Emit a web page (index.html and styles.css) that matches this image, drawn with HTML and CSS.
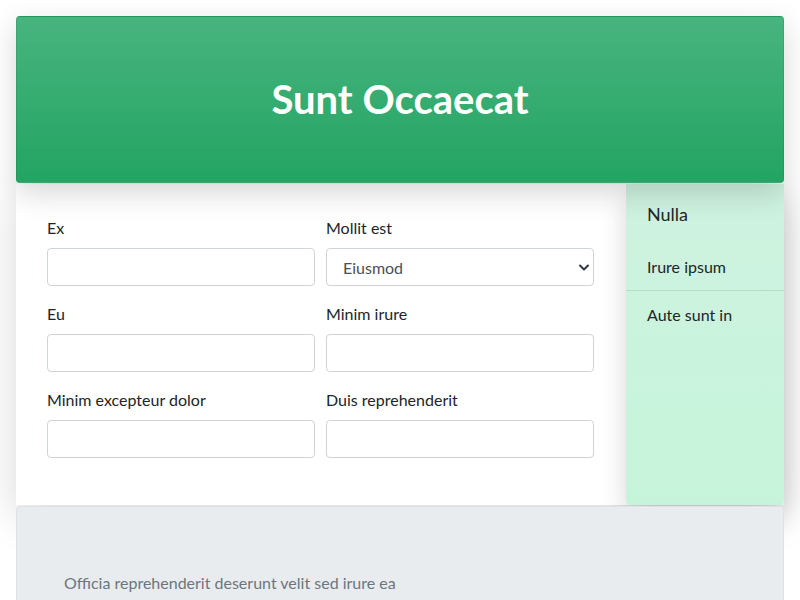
FILE: index.html
```html
<!DOCTYPE html>
<html lang="en">
<head>
<meta charset="utf-8">
<title>Sunt Occaecat</title>
<link rel="stylesheet" href="styles.css">
</head>
<body>
<div class="page">
  <header class="hero">
    <h1 class="hero-title">Sunt Occaecat</h1>
  </header>
  <div class="middle">
    <form class="form">
      <div class="field">
        <label class="label" for="f1">Ex</label>
        <input class="input" id="f1" type="text">
      </div>
      <div class="field">
        <label class="label" for="f2">Mollit est</label>
        <div class="select-wrap">
          <select class="input select" id="f2"><option>Eiusmod</option></select>
          <svg class="chevron" width="12" height="10" viewBox="0 0 12 10"><path d="M2 3.5l4 4 4-4" fill="none" stroke="#343a40" stroke-width="2" stroke-linecap="round" stroke-linejoin="round"/></svg>
        </div>
      </div>
      <div class="field">
        <label class="label" for="f3">Eu</label>
        <input class="input" id="f3" type="text">
      </div>
      <div class="field">
        <label class="label" for="f4">Minim irure</label>
        <input class="input" id="f4" type="text">
      </div>
      <div class="field">
        <label class="label" for="f5">Minim excepteur dolor</label>
        <input class="input" id="f5" type="text">
      </div>
      <div class="field">
        <label class="label" for="f6">Duis reprehenderit</label>
        <input class="input" id="f6" type="text">
      </div>
    </form>
    <aside class="side">
      <div class="side-head">Nulla</div>
      <div class="side-item side-item-first">Irure ipsum</div>
      <div class="side-item">Aute sunt in</div>
    </aside>
  </div>
  <footer class="foot">
    <p class="foot-text">Officia reprehenderit deserunt velit sed irure ea</p>
  </footer>
</div>
</body>
</html>
```
FILE: styles.css
```css
* { box-sizing: border-box; }
html, body { margin: 0; background: #fff; }
body {
  font-family: "Lato", "Liberation Sans", sans-serif;
  font-size: 16px;
  line-height: 24px;
  color: #212529;
}
.page {
  padding: 16px 16px 0 16px;
  display: flex;
  flex-direction: column;
}
.hero {
  height: 167px;
  border: 1px solid rgba(0,0,0,0.08);
  border-radius: 4px;
  background: linear-gradient(180deg, #48b47f 0%, #23a462 100%);
  box-shadow: 0 10px 30px rgba(0,0,0,0.16);
  display: flex;
  align-items: center;
  justify-content: center;
  position: relative;
  z-index: 1;
}
.hero-title {
  margin: 0;
  color: #fff;
  font-size: 40px;
  line-height: 48px;
  font-weight: 700;
  padding-bottom: 2px;
}
.middle {
  display: flex;
  margin-top: 1px;
  box-shadow: 0 10px 40px rgba(0,0,0,0.16);
  background: #fff;
}
.form {
  flex: 1;
  padding: 32px 32px 31px 31px;
  display: grid;
  grid-template-columns: 1fr 1fr;
  column-gap: 11px;
  align-content: start;
}
.field {
  display: flex;
  flex-direction: column;
  margin-bottom: 16px;
}
.label {
  display: block;
  margin-bottom: 8px;
  line-height: 24px;
  color: #212529;
}
.input {
  display: block;
  width: 100%;
  height: 38px;
  border: 1px solid #ced4da;
  border-radius: 4px;
  background: #fff;
  font-family: inherit;
  font-size: 16px;
  color: #495057;
  padding: 6px 12px;
  margin: 0;
}
.select-wrap { position: relative; }
.select {
  appearance: none;
  -webkit-appearance: none;
  padding-left: 16px;
  padding-right: 32px;
}
.chevron {
  position: absolute;
  right: 4px;
  top: 14px;
  pointer-events: none;
}
.side {
  width: 158px;
  flex: none;
  background: linear-gradient(180deg, #cef2e0 0%, #c6f4da 100%);
  border-radius: 0 0 4px 4px;
  box-shadow: 0 14px 26px rgba(0,0,0,0.16);
  position: relative;
  z-index: 0;
}
.side-head {
  font-size: 18px;
  line-height: 24px;
  padding: 18px 21px 17px 21px;
  color: #212529;
}
.side-item {
  padding: 12px 21px 11px 21px;
  line-height: 24px;
  color: #212529;
}
.side-item-first {
  border-bottom: 1px solid #b3dcc6;
}
.foot {
  margin-top: 1px;
  background: #e9ecef;
  border: 1px solid #dee2e6;
  border-radius: 4px;
  padding: 64px 47px 40px 47px;
  position: relative;
}
.foot-text {
  margin: 0;
  color: #6c757d;
  line-height: 24px;
}
```
